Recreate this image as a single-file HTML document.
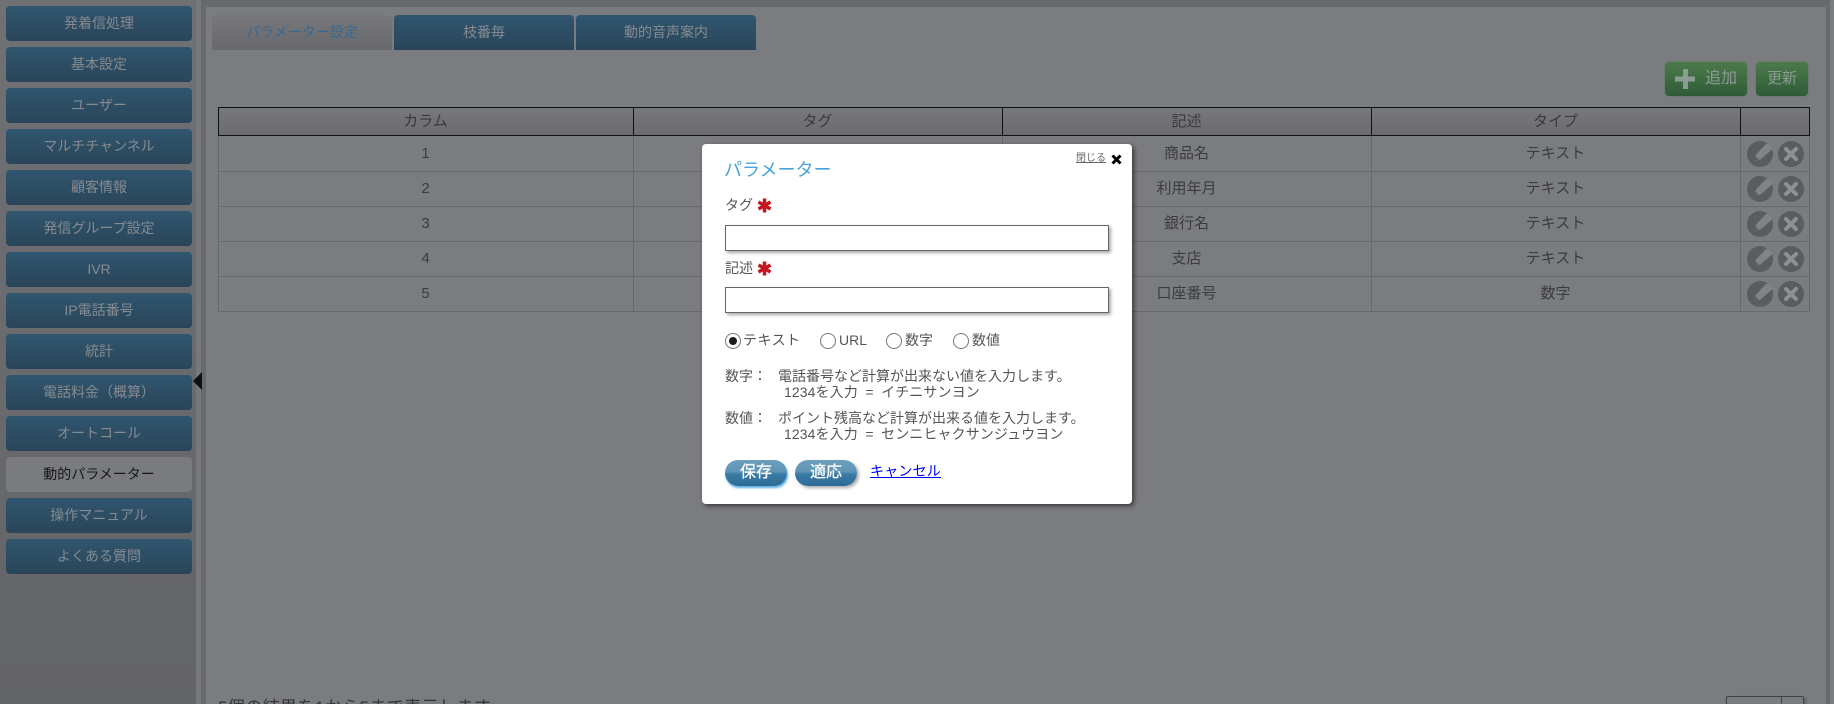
<!DOCTYPE html>
<html lang="ja"><head><meta charset="utf-8"><title>パラメーター</title>
<style>
*{box-sizing:border-box}
html,body{margin:0;padding:0;width:1834px;height:704px;overflow:hidden;background:#7b7c80}
body{position:relative;font-family:"Liberation Sans","Noto Sans CJK JP",sans-serif;font-size:14px;color:#3b3c3f}
.a,.nav a,.tab{position:absolute}
#side{position:absolute;left:0;top:0;width:196px;height:704px;background:linear-gradient(#707175,#636468)}
#strip1{position:absolute;left:196px;top:0;width:5px;height:704px;background:#77787c}
#strip2{position:absolute;left:201px;top:0;width:5px;height:704px;background:#68696d}
#top{position:absolute;left:201px;top:0;width:1629px;height:7px;background:#68696d}
#strip3{position:absolute;left:1826px;top:0;width:4px;height:704px;background:#68696d}
#panel{position:absolute;left:206px;top:7px;width:1620px;height:697px;background:#7b7c80;border-radius:3px 3px 0 0}
.nav a{left:6px;width:186px;height:35px;border-radius:4px;background:linear-gradient(#30566f,#2a4559);color:#868b8f;text-align:center;line-height:35px;font-size:14px}
.nav a.on{background:#7a7b7f;color:#17181a}
.tab{top:15px;width:180px;height:35px;border-radius:4px 4px 0 0;background:linear-gradient(#30566f,#2a4559);color:#858b90;text-align:center;line-height:35px}
.tab.on{background:linear-gradient(#77787c,#68696d);color:#3a678c}
.gb{position:absolute;top:62px;height:34px;border-radius:4px;background:linear-gradient(#4d7a4b,#2f5c38);box-shadow:0 0 0 1px #6e7b70;color:#8a9c92;line-height:34px;text-align:center;font-size:15px}
#th{position:absolute;left:218px;top:107px;width:1592px;height:29px;background:linear-gradient(#77787c,#6b6c70);border:1px solid #101114}
.thc{position:absolute;top:107px;height:29px;line-height:29px;text-align:center;color:#3a3a3d;font-size:15px}
.vl{position:absolute;top:107px;width:1px;height:29px;background:#101114}
.vr{position:absolute;top:136px;width:1px;height:175px;background:#68696d}
.hr{position:absolute;left:218px;width:1592px;height:1px;background:#68696d}
.c{position:absolute;height:35px;line-height:35px;text-align:center;color:#3b3c3f;font-size:15px}
.ic{position:absolute;width:26px;height:26px}
#modal{position:absolute;left:702px;top:144px;width:430px;height:360px;background:#fff;border-radius:4px;box-shadow:2px 2px 5px rgba(0,0,0,.55);color:#555}
#modal .t{position:absolute;white-space:nowrap;line-height:20px}
.inp{position:absolute;left:23px;width:384px;height:26px;background:#fff;border:1px solid #666;box-shadow:2px 2px 3px #aaa}
.rd{position:absolute;top:189px;width:16px;height:16px;border-radius:50%;border:1px solid #777;background:#fff}
.btn{position:absolute;top:316px;width:62px;height:26px;border-radius:13px;background:linear-gradient(#6d9fbe 0,#5f94b6 45%,#3a7ba5 55%,#2c6b96 100%);color:#fff;text-align:center;line-height:25px;font-size:16px;-webkit-text-stroke:.25px #fff}
</style></head><body>
<div id="side"></div><div id="strip1"></div><div id="strip2"></div><div id="top"></div><div id="strip3"></div><div id="panel"></div>
<svg class="a" style="left:192px;top:372px" width="12" height="18"><path d="M10 0V18L1 9Z" fill="#0f1012"/></svg>
<div class="nav">
<a style="top:6px">発着信処理</a><a style="top:47px">基本設定</a><a style="top:88px">ユーザー</a><a style="top:129px">マルチチャンネル</a><a style="top:170px">顧客情報</a><a style="top:211px">発信グループ設定</a><a style="top:252px">IVR</a><a style="top:293px">IP電話番号</a><a style="top:334px">統計</a><a style="top:375px">電話料金（概算）</a><a style="top:416px">オートコール</a><a class="on" style="top:457px">動的パラメーター</a><a style="top:498px">操作マニュアル</a><a style="top:539px">よくある質問</a>
</div>
<div class="tab on" style="left:212px">パラメーター設定</div><div class="tab" style="left:394px">枝番毎</div><div class="tab" style="left:576px">動的音声案内</div>
<div class="gb" style="left:1665px;width:82px;padding-left:32px;text-align:left;font-size:16px"><span style="margin-left:8px">追加</span></div>
<svg class="a" style="left:1675px;top:69px" width="20" height="20"><path d="M8 0h5v7.500h7v5h-7v7.500h-5v-7.500h-8v-5h8z" fill="#8b9c92"/></svg>
<div class="gb" style="left:1756px;width:52px">更新</div>
<div id="th"></div>
<div class="vl" style="left:633px"></div><div class="vl" style="left:1002px"></div><div class="vl" style="left:1371px"></div><div class="vl" style="left:1740px"></div>
<div class="thc" style="left:218px;width:415px">カラム</div><div class="thc" style="left:633px;width:369px">タグ</div><div class="thc" style="left:1002px;width:369px">記述</div><div class="thc" style="left:1371px;width:369px">タイプ</div>
<div class="vr" style="left:218px"></div><div class="vr" style="left:633px"></div><div class="vr" style="left:1002px"></div><div class="vr" style="left:1371px"></div><div class="vr" style="left:1740px"></div><div class="vr" style="left:1809px"></div>
<div class="hr" style="top:171px"></div><div class="hr" style="top:206px"></div><div class="hr" style="top:241px"></div><div class="hr" style="top:276px"></div><div class="hr" style="top:311px"></div>
<div class="c" style="left:218px;width:415px;top:136px">1</div><div class="c" style="left:218px;width:415px;top:171px">2</div><div class="c" style="left:218px;width:415px;top:206px">3</div><div class="c" style="left:218px;width:415px;top:241px">4</div><div class="c" style="left:218px;width:415px;top:276px">5</div>
<div class="c" style="left:1002px;width:369px;top:136px">商品名</div><div class="c" style="left:1002px;width:369px;top:171px">利用年月</div><div class="c" style="left:1002px;width:369px;top:206px">銀行名</div><div class="c" style="left:1002px;width:369px;top:241px">支店</div><div class="c" style="left:1002px;width:369px;top:276px">口座番号</div>
<div class="c" style="left:1371px;width:369px;top:136px">テキスト</div><div class="c" style="left:1371px;width:369px;top:171px">テキスト</div><div class="c" style="left:1371px;width:369px;top:206px">テキスト</div><div class="c" style="left:1371px;width:369px;top:241px">テキスト</div><div class="c" style="left:1371px;width:369px;top:276px">数字</div>
<svg width="0" height="0" style="position:absolute"><defs>
<symbol id="pe" viewBox="0 0 26 26"><circle cx="13" cy="13" r="13" fill="#5b5c60"/><path d="M7 20 9 13.500 19.500 2.500 Q24 3.500 25.500 8 L13.500 18.500Z" fill="#828387"/><path d="M7 20 8.500 15.500 11.500 18.500Z" fill="#5b5c60"/></symbol>
<symbol id="xx" viewBox="0 0 26 26"><circle cx="13" cy="13" r="13" fill="#5b5c60"/><path d="M8 8 18 18M18 8 8 18" stroke="#8f9093" stroke-width="4" stroke-linecap="round"/></symbol>
</defs></svg>
<svg class="ic" style="left:1747px;top:141px"><use href="#pe"/></svg><svg class="ic" style="left:1778px;top:141px"><use href="#xx"/></svg>
<svg class="ic" style="left:1747px;top:176px"><use href="#pe"/></svg><svg class="ic" style="left:1778px;top:176px"><use href="#xx"/></svg>
<svg class="ic" style="left:1747px;top:211px"><use href="#pe"/></svg><svg class="ic" style="left:1778px;top:211px"><use href="#xx"/></svg>
<svg class="ic" style="left:1747px;top:246px"><use href="#pe"/></svg><svg class="ic" style="left:1778px;top:246px"><use href="#xx"/></svg>
<svg class="ic" style="left:1747px;top:281px"><use href="#pe"/></svg><svg class="ic" style="left:1778px;top:281px"><use href="#xx"/></svg>
<div class="a" style="left:218px;top:698px;font-size:17px;line-height:20px;white-space:nowrap;color:#333437;letter-spacing:.4px">5個の結果を1から5まで表示します</div>
<div class="a" style="left:1726px;top:696px;width:78px;height:20px;border:1px solid #404145;border-radius:2px;box-shadow:2px 2px 3px #606165"></div>
<div class="a" style="left:1781px;top:696px;width:1px;height:10px;background:#404145"></div>

<div id="modal">
<div class="t" style="left:22px;top:15px;font-size:18px;line-height:22px;color:#4aa3d8">パラメーター</div>
<div class="t" style="left:374px;top:8px;font-size:10px;line-height:14px;color:#666;text-decoration:underline">閉じる</div>
<svg class="a" style="left:409px;top:10px" width="11" height="11"><path d="M1.500 1.500 9.500 9.500M9.500 1.500 1.500 9.500" stroke="#000" stroke-width="3"/></svg>
<div class="t" style="left:23px;top:51px">タグ</div>
<svg class="a" style="left:55px;top:54px" width="15" height="15"><path d="M7.500 .5V14.500M1.500 4 13.500 11M13.500 4 1.500 11" stroke="#c4161c" stroke-width="3.500"/></svg>
<div class="inp" style="top:81px"></div>
<div class="t" style="left:23px;top:114px">記述</div>
<svg class="a" style="left:55px;top:117px" width="15" height="15"><path d="M7.500 .5V14.500M1.500 4 13.500 11M13.500 4 1.500 11" stroke="#c4161c" stroke-width="3.500"/></svg>
<div class="inp" style="top:143px"></div>
<div class="rd" style="left:23px"></div><div class="a" style="left:27px;top:193px;width:8px;height:8px;border-radius:50%;background:#1c1c1c"></div>
<div class="t" style="left:41px;top:186px;letter-spacing:.5px">テキスト</div>
<div class="rd" style="left:118px"></div><div class="t" style="left:137px;top:186px">URL</div>
<div class="rd" style="left:184px"></div><div class="t" style="left:203px;top:186px">数字</div>
<div class="rd" style="left:251px"></div><div class="t" style="left:270px;top:186px">数値</div>
<div class="t" style="left:23px;top:222px">数字：</div>
<div class="t" style="left:76px;top:222px">電話番号など計算が出来ない値を入力します。</div>
<div class="t" style="left:82px;top:238px;word-spacing:3.500px;letter-spacing:.1px">1234を入力 = イチニサンヨン</div>
<div class="t" style="left:23px;top:264px">数値：</div>
<div class="t" style="left:76px;top:264px">ポイント残高など計算が出来る値を入力します。</div>
<div class="t" style="left:82px;top:280px;word-spacing:3.500px;letter-spacing:.1px">1234を入力 = センニヒャクサンジュウヨン</div>
<div class="btn" style="left:23px;box-shadow:1px 2px 2px #5aaee0">保存</div>
<div class="btn" style="left:93px;box-shadow:2px 2px 3px #aaa">適応</div>
<a class="t" style="left:168px;top:317px;color:#00f;text-decoration:underline;letter-spacing:.2px">キャンセル</a>
</div>
</body></html>
